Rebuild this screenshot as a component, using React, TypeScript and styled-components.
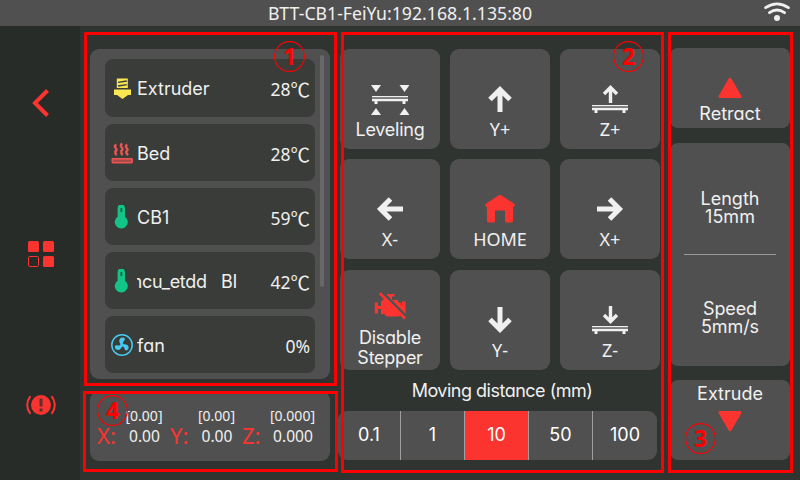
import React from "react";
import styled, { createGlobalStyle } from "styled-components";

const RED = "#fb3430";
const LIGHT = "#f0f0f0";
const PANEL = "#505050";

const GlobalStyle = createGlobalStyle`
  * { box-sizing: border-box; }
  body { margin: 0; background: #303430; overflow: hidden; }
  svg { display: block; flex: none; }
`;

const Screen = styled.div`
  position: relative;
  width: 800px;
  height: 480px;
  display: flex;
  flex-direction: column;
  background: #303430;
  color: ${LIGHT};
  font-family: Inter, "Noto Sans CJK SC", sans-serif;
  font-feature-settings: "cv11";
  font-size: 18px;
  line-height: 20px;
`;

const TopBar = styled.header`
  position: relative;
  height: 26px;
  flex: none;
  display: flex;
  align-items: center;
  justify-content: center;
  background: ${PANEL};
`;

const Title = styled.h1`
  margin: 0 0 1px;
  font: 17.7px/20px "Noto Sans", sans-serif;
`;

const WifiSlot = styled.div`
  position: absolute;
  right: 9px;
  top: 1px;
`;

const Body = styled.div`
  flex: 1;
  display: flex;
`;

const Sidebar = styled.nav`
  width: 80px;
  padding: 1px 0 0 2px;
  display: grid;
  grid-template-rows: repeat(3, 151px);
  place-items: center;
  background: #282c28;
`;

const LeftColumn = styled.section`
  width: 240px;
  margin: 23px 10px 0 10px;
  display: flex;
  flex-direction: column;
  gap: 12px;
`;

const DeviceList = styled.div`
  height: 330px;
  padding: 10px 6px 6px 15px;
  display: flex;
  gap: 5px;
  border-radius: 9px;
  background: ${PANEL};
`;

const Rows = styled.div`
  width: 210px;
  display: flex;
  flex-direction: column;
  gap: 7px;
`;

const DeviceRow = styled.div`
  height: 57px;
  flex: none;
  padding: 0 5px 0 6px;
  display: flex;
  align-items: center;
  border-radius: 8px;
  background: #393c38;
  &:first-child { height: 58px; }
`;

const DeviceName = styled.div<{ $clip?: boolean }>`
  width: ${(p) => (p.$clip ? 100 : 102)}px;
  margin: 2px 0 0 4px;
  display: flex;
  justify-content: ${(p) => (p.$clip ? "flex-end" : "flex-start")};
  letter-spacing: ${(p) => (p.$clip ? -0.3 : 0)}px;
  overflow: hidden;
  white-space: pre;
`;

const Reading = styled.span`
  margin-left: auto;
  margin-top: 2px;
  display: flex;
  font: 17.5px/20px "Noto Sans", sans-serif;
`;

const Unit = styled.span`
  font: 19.5px/20px "Noto Sans CJK SC", sans-serif;
`;

const ScrollThumb = styled.div`
  width: 4px;
  height: 232px;
  margin-top: -4px;
  border-radius: 2px;
  background: #686868;
`;

const PositionPanel = styled.div`
  height: 70px;
  padding: 15px 0 0 7px;
  display: grid;
  grid-template-columns: 73px 72px 80px;
  border-radius: 9px;
  background: ${PANEL};
`;

const Axis = styled.div`
  display: grid;
  grid-template-columns: 21px 1fr;
  grid-template-rows: 20px 21px;
`;

const AxisLetter = styled.span`
  grid-area: 2 / 1;
  margin-top: -1px;
  color: ${RED};
  white-space: nowrap;
  font: 22px/21px "Noto Sans", sans-serif;
`;

const Target = styled.span`
  grid-column: 2;
  text-align: center;
  font: 14px/20px "Noto Sans", sans-serif;
`;

const Current = styled(Target)`
  padding-left: 1px;
  font-size: 15.6px;
  line-height: 21px;
`;

const MotionColumn = styled.section`
  width: 320px;
  margin-top: 23px;
`;

const Pad = styled.div`
  display: grid;
  grid-template-columns: repeat(3, 100px);
  grid-template-rows: 100px 101px 100px;
  gap: 10px;
`;

const Key = styled.button<{ $lift?: number; $gap?: number }>`
  height: 100px;
  padding: 0 0 ${(p) => p.$lift ?? 10}px;
  border: 0;
  border-radius: 9px;
  display: flex;
  flex-direction: column;
  align-items: center;
  justify-content: flex-end;
  gap: ${(p) => p.$gap ?? 5}px;
  background: ${PANEL};
  color: inherit;
  font: inherit;
`;

const KeyText = styled.span<{ $axis?: boolean }>`
  white-space: pre-line;
  letter-spacing: ${(p) => (p.$axis ? 0 : -0.25)}px;
  font-family: ${(p) => (p.$axis ? '"Noto Sans"' : "Inter")}, sans-serif;
`;

const DistanceTitle = styled.div`
  height: 41px;
  padding: 11px 0 0 4px;
  text-align: center;
  letter-spacing: -0.5px;
`;

const DistanceBar = styled.div`
  width: 319px;
  height: 49px;
  margin-left: -2px;
  display: grid;
  grid-template-columns: 62px 64px 64px 64px 65px;
  border-radius: 9px;
  overflow: hidden;
  background: ${PANEL};
`;

const Distance = styled.button<{ $active?: boolean }>`
  padding: 0 0 2px;
  border: 0;
  border-left: 1px solid #a0a0a0;
  background: ${(p) => (p.$active ? RED : "transparent")};
  color: #fff;
  font: inherit;
  &:first-child { border-left: 0; }
`;

const ExtrudeColumn = styled.section`
  width: 120px;
  margin: 22px 0 0 10px;
  display: flex;
  flex-direction: column;
`;

const ExtrudeKey = styled.button<{ $down?: boolean }>`
  height: 80px;
  padding: ${(p) => (p.$down ? "4px 0 0" : "29px 0 0")};
  border: 0;
  border-radius: 8px;
  display: flex;
  flex-direction: column;
  align-items: center;
  gap: ${(p) => (p.$down ? 6 : 5)}px;
  background: ${PANEL};
  color: inherit;
  font: inherit;
`;

const Settings = styled.div`
  height: 223px;
  margin: 15px 0 14px;
  padding: 0 14px;
  display: grid;
  grid-template-rows: 111px 112px;
  border-radius: 8px;
  background: ${PANEL};
`;

const Setting = styled.div`
  padding-top: 47px;
  text-align: center;
  line-height: 18px;
  white-space: pre-line;
  & + & { border-top: 1px solid #989a98; padding-top: 45px; letter-spacing: -0.1px; }
`;

const Region = styled.div<{ $box: [number, number, number, number] }>`
  position: absolute;
  left: ${(p) => p.$box[0]}px;
  top: ${(p) => p.$box[1]}px;
  width: ${(p) => p.$box[2]}px;
  height: ${(p) => p.$box[3]}px;
  border: 3px solid #f00;
  pointer-events: none;
`;

const Marker = styled.div<{ $x: number; $y: number }>`
  position: absolute;
  left: ${(p) => p.$x}px;
  top: ${(p) => p.$y}px;
  width: 31px;
  height: 31px;
  display: grid;
  place-items: center;
  color: #f00;
  font: bold 23px/29px "Noto Sans", sans-serif;
  & > * { grid-area: 1 / 1; }
`;

const Ring = () => (
  <svg width="31" height="31" viewBox="0 0 31 31">
    <circle cx="15.5" cy="15.5" r="14.9" fill="none" stroke="#f00" strokeWidth="1.1" />
  </svg>
);

const WifiIcon = () => (
  <svg width="28" height="21" viewBox="0 0 28 21" fill="none" stroke={LIGHT} strokeWidth="2.8" strokeLinecap="round">
    <path d="M2.6 6.6Q14 -1 25.4 6.6M6.5 11.7Q14 6.4 21.5 11.7" />
    <circle cx="14" cy="17" r="3" fill={LIGHT} stroke="none" />
  </svg>
);

const BackIcon = () => (
  <svg width="18" height="30" viewBox="0 0 18 30">
    <path d="M15.5 2.5L3 15L15.5 27.5" fill="none" stroke={RED} strokeWidth="4" />
  </svg>
);

const GridIcon = () => (
  <svg width="26" height="26" viewBox="0 0 26 26" fill={RED}>
    <rect width="11" height="11" rx="1.5" />
    <rect x="15" width="11" height="11" rx="1.5" />
    <rect x="15" y="15" width="11" height="11" rx="1.5" />
    <rect x=".5" y="15.5" width="10" height="10" rx="1.2" fill="none" stroke={RED} />
  </svg>
);

const AlertIcon = () => (
  <svg width="30" height="20" viewBox="0 0 30 20">
    <circle cx="15" cy="10" r="10" fill={RED} />
    <path d="M4.4 1.2Q-2 10 4.4 18.8M25.6 1.2Q32 10 25.6 18.8" fill="none" stroke={RED} strokeWidth="2" />
    <path d="M15 3.5V11.5M15 13.5V16.5" stroke="#573432" strokeWidth="3" />
  </svg>
);

const ExtruderIcon = () => (
  <svg width="22" height="22" viewBox="0 0 22 22">
    <path d="M5.8 1.5H16.8V11H5.8Z" fill="#fae650" />
    <path d="M7 5.4L15.8 4M7 9L15.8 7.6" stroke="#393c38" strokeWidth="1.4" />
    <path d="M3 12.5H20V18H17L11.5 22L6 18H3Z" fill="#fae650" />
  </svg>
);

const BedIcon = () => (
  <svg width="22" height="22" viewBox="0 0 22 22" fill="none" stroke="#ee5552">
    <path d="M5.2 2.5Q2.8 4 4.7 6T4.3 9.5Q3.9 11.5 5.7 13M11.2 1.5Q8.8 3.5 10.7 5.5T10.3 9Q9.9 11.5 11.7 13M16.2 2.5Q13.8 4 15.7 6T15.3 9.5Q14.9 11.5 17.2 13" strokeWidth="2.4" />
    <rect x="1.2" y="16.8" width="20" height="4" rx=".7" fill="#a64b49" strokeWidth="1.4" />
  </svg>
);

const ThermoIcon = () => (
  <svg width="22" height="24" viewBox="0 0 22 24" fill="#12c487">
    <g transform="translate(-.2 -.5)">
      <path d="M6.8 4A3.7 4 0 0 1 14.2 4V12.2A6.5 6.5 0 1 1 6.8 12.2Z" />
      <rect x="9.7" y="3.5" width="1.7" height="4" fill="#26543e" />
    </g>
  </svg>
);

const FanIcon = () => (
  <svg width="22" height="22" viewBox="0 0 22 22" fill="#48c9f2">
    <circle cx="11" cy="11" r="10.2" fill="none" stroke="#48c9f2" strokeWidth="1.5" />
    {[0, 120, 240].map((a) => (
      <path key={a} d="M10.3 10.8C7.8 8.6 7.5 5 10.3 3.7C13.3 3 15.3 5 12.7 7.2C11.7 8 11.7 9.5 12 10.6Z" transform={`rotate(${a} 11 11)`} />
    ))}
    <circle cx="11" cy="11" r="1.7" />
  </svg>
);

const ArrowIcon = ({ angle = 0 }: { angle?: number }) => (
  <svg width="28" height="28" viewBox="0 0 28 28">
    <path d="M14 27V4M4 14.5L14 4.5L24 14.5" fill="none" stroke={LIGHT} strokeWidth="5" transform={`rotate(${angle} 14 14)`} />
  </svg>
);

const Plate = ({ y }: { y: number }) => (
  <g transform={`translate(0 ${y})`}>
    <path d="M0 0H36V1.2H0ZM0 3H36V5.2H33.5V8H30.5V5.2H5.5V8H2.5V5.2H0Z" fill={LIGHT} />
    <path d="M0 2H36" stroke="#8a8a8a" strokeWidth="1.6" />
  </g>
);

const LevelingIcon = () => (
  <svg width="38" height="32" viewBox="-1 0 38 32" fill={LIGHT}>
    <path d="M-1 1H9L4 8ZM27.5 1H37.5L32.5 8ZM-1 31H9L4 24ZM27.5 31H37.5L32.5 24Z" />
    <Plate y={12} />
  </svg>
);

const BedMoveIcon = ({ down }: { down?: boolean }) => (
  <svg width="36" height="29" viewBox="0 0 36 29">
    <path d={down ? "M18.5 0V16M12 9L18.5 15.5L25 9" : "M18.5 18V2M12 9L18.5 2.5L25 9"} fill="none" stroke={LIGHT} strokeWidth="3.4" />
    <Plate y={20} />
  </svg>
);

const HomeIcon = () => (
  <svg width="32" height="29" viewBox="0 0 32 29">
    <path d="M14.8 1.2Q16 .4 17.2 1.2L30.5 10Q31.5 11.2 30.2 12.3L29 13V27Q29 28.5 27.5 28.5H22.5Q21 28.5 21 27V16.5H11V27Q11 28.5 9.5 28.5H4.5Q3 28.5 3 27V13L1.5 12.3Q.5 11.2 1.5 10Z" fill={RED} />
  </svg>
);

const StepperIcon = () => (
  <svg width="32" height="28" viewBox="0 0 32 28">
    <path d="M13 2H20.5V4.5H18V8H24V10L27 11V13H28V9.5H31.5V24H28V19H27V22L25 24.5H13L10 22H7V17H4V21.5H.8V10.5H4V14H7V9.5L10 7H15V4.5H13Z" fill={RED} />
    <path d="M7.5 -.5L33 25" stroke={PANEL} strokeWidth="2.6" />
    <path d="M5.8 1.2L31 26.5" stroke={RED} strokeWidth="2.8" />
  </svg>
);

const TriangleIcon = ({ down }: { down?: boolean }) => (
  <svg width="24" height="22" viewBox="0 0 24 22">
    <path d="M12 2.2L22 19.5H2Z" fill={RED} stroke={RED} strokeWidth="3" strokeLinejoin="round" transform={down ? "rotate(180 12 11)" : undefined} />
  </svg>
);

const devices = [
  { name: "Extruder", value: "28", unit: "℃", icon: <ExtruderIcon /> },
  { name: "Bed", value: "28", unit: "℃", icon: <BedIcon /> },
  { name: "CB1", value: "59", unit: "℃", icon: <ThermoIcon /> },
  { name: "mcu_etdd   BI", value: "42", unit: "℃", icon: <ThermoIcon />, clip: true },
  { name: "fan", value: "0%", icon: <FanIcon /> },
];

const keys = [
  { label: "Leveling", icon: <LevelingIcon />, gap: 4, lift: 9 },
  { label: "Y+", icon: <ArrowIcon />, axis: true, gap: 6 },
  { label: "Z+", icon: <BedMoveIcon />, axis: true },
  { label: "X-", icon: <ArrowIcon angle={-90} />, axis: true, gap: 6 },
  { label: "HOME", icon: <HomeIcon />, axis: true, gap: 6 },
  { label: "X+", icon: <ArrowIcon angle={90} />, axis: true, gap: 6 },
  { label: "Disable\nStepper", icon: <StepperIcon />, lift: 2, gap: 8 },
  { label: "Y-", icon: <ArrowIcon angle={180} />, axis: true, gap: 6 },
  { label: "Z-", icon: <BedMoveIcon down />, axis: true },
];

const axes = [
  { letter: "X:", target: "[0.00]", current: "0.00" },
  { letter: "Y:", target: "[0.00]", current: "0.00" },
  { letter: "Z:", target: "[0.000]", current: "0.000" },
];

export default function App() {
  return (
    <Screen>
      <GlobalStyle />
      <TopBar>
        <Title>BTT-CB1-FeiYu:192.168.1.135:80</Title>
        <WifiSlot><WifiIcon /></WifiSlot>
      </TopBar>
      <Body>
        <Sidebar>
          <BackIcon />
          <GridIcon />
          <AlertIcon />
        </Sidebar>
        <LeftColumn>
          <DeviceList>
            <Rows>
              {devices.map((d) => (
                <DeviceRow key={d.name}>
                  {d.icon}
                  <DeviceName $clip={d.clip}>{d.name}</DeviceName>
                  <Reading>
                    {d.value}
                    {d.unit && <Unit>{d.unit}</Unit>}
                  </Reading>
                </DeviceRow>
              ))}
            </Rows>
            <ScrollThumb />
          </DeviceList>
          <PositionPanel>
            {axes.map((a) => (
              <Axis key={a.letter}>
                <Target>{a.target}</Target>
                <AxisLetter>{a.letter}</AxisLetter>
                <Current>{a.current}</Current>
              </Axis>
            ))}
          </PositionPanel>
        </LeftColumn>
        <MotionColumn>
          <Pad>
            {keys.map((k) => (
              <Key key={k.label} $lift={k.lift} $gap={k.gap}>
                {k.icon}
                <KeyText $axis={k.axis}>{k.label}</KeyText>
              </Key>
            ))}
          </Pad>
          <DistanceTitle>Moving distance (mm)</DistanceTitle>
          <DistanceBar>
            {["0.1", "1", "10", "50", "100"].map((d) => (
              <Distance key={d} $active={d === "10"}>{d}</Distance>
            ))}
          </DistanceBar>
        </MotionColumn>
        <ExtrudeColumn>
          <ExtrudeKey>
            <TriangleIcon />
            Retract
          </ExtrudeKey>
          <Settings>
            <Setting>{"Length\n15mm"}</Setting>
            <Setting>{"Speed\n5mm/s"}</Setting>
          </Settings>
          <ExtrudeKey $down>
            Extrude
            <TriangleIcon down />
          </ExtrudeKey>
        </ExtrudeColumn>
      </Body>
      <Region $box={[84, 32, 253, 354]} />
      <Region $box={[341, 32, 323, 441]} />
      <Region $box={[668, 32, 125, 441]} />
      <Region $box={[83, 391, 255, 81]} />
      <Marker $x={274} $y={41}><Ring /><span>1</span></Marker>
      <Marker $x={613} $y={41}><Ring /><span>2</span></Marker>
      <Marker $x={685} $y={423}><Ring /><span>3</span></Marker>
      <Marker $x={97} $y={395}><Ring /><span>4</span></Marker>
    </Screen>
  );
}
